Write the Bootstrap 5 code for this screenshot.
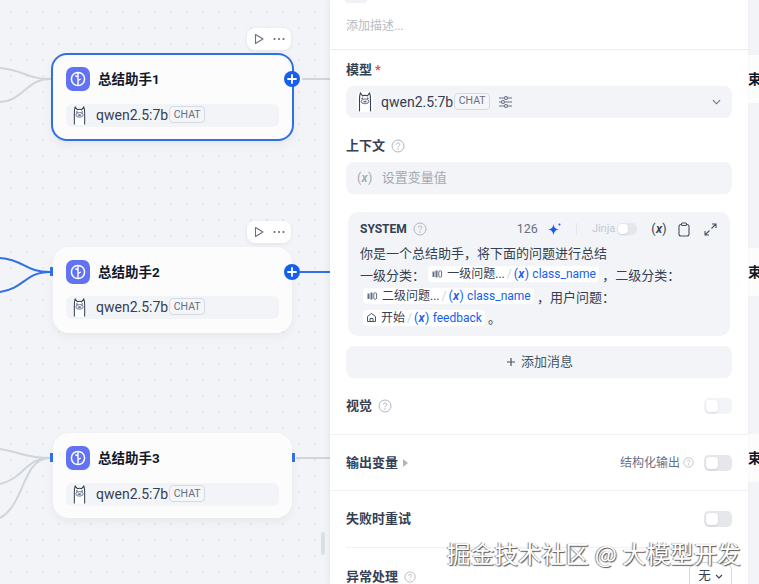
<!DOCTYPE html>
<html lang="zh-CN">
<head>
<meta charset="UTF-8">
<title>总结助手</title>
<link href="https://cdn.jsdelivr.net/npm/bootstrap@5.3.0/dist/css/bootstrap.min.css" rel="stylesheet">
<style>
html, body { height: 100%; }
body { margin: 0; overflow: hidden; background: #f2f4f7; font-family: Roboto, "Noto Sans CJK SC", sans-serif; color: #354052; font-size: 13px; }
.flow-canvas { position: absolute; inset: 0; overflow: hidden; background-color: #f2f4f7; background-image: radial-gradient(circle, #e6e8ec 1px, transparent 1.2px); background-size: 16px 16px; background-position: 3px 4px; }
.edges { position: absolute; left: 0; top: 0; }
.flow-node { position: absolute; left: 53px; width: 239px; background: #fcfcfd; border-radius: 16px; box-shadow: 0 4px 10px rgba(16,24,40,.05); padding: 13px 13px 0; }
.flow-node.picked { left: 51px; width: 243px; border: 2px solid #2f6fe8; }
.n1 { top: 53px; height: 88px; padding-top: 12px; }
.n2 { top: 247px; height: 86px; }
.n3 { top: 433px; height: 85px; }
.node-icon { width: 24px; height: 24px; border-radius: 7px; background: #6172f3; flex: none; }
.node-title { font-size: 13.5px; font-weight: 700; color: #101828; margin-left: 8px; }
.model-row { height: 23px; margin-top: 13px; background: #f2f4f7; border-radius: 6px; padding-left: 6px; color: #354052; }
.n2 .model-row { margin-top: 12px; }
.model-text { font-size: 14px; margin-left: 9px; white-space: nowrap; }
.chat-tag { display: inline-flex; align-items: center; justify-content: center; height: 17px; width: 36px; margin-left: 1px; border: 1px solid #d5d9e0; border-radius: 4px; font-size: 10.5px; color: #676f83; background: #f5f6f8; flex: none; position: relative; top: -1px; }
.node-tools { position: absolute; left: 247px; width: 44px; height: 22px; background: #fff; border-radius: 8px; box-shadow: 0 1px 4px rgba(16,24,40,.08); }
.tools-1 { top: 28px; }
.tools-2 { top: 221px; }
.add-handle { position: absolute; left: 284px; width: 16px; height: 16px; border-radius: 50%; background: #155eef; color: #fff; }
.add-1 { top: 71px; }
.add-2 { top: 264px; }
.port { position: absolute; width: 3px; height: 9px; background: #2f6fe8; }
.port-2l { left: 50px; top: 267px; }
.port-3l { left: 50px; top: 453px; }
.port-3r { left: 292px; top: 453px; }
.next-node { position: absolute; left: 748px; width: 11px; height: 48px; background: #fcfcfd; font-size: 13.5px; font-weight: 700; color: #101828; line-height: 48px; overflow: hidden; white-space: nowrap; }
.next-1 { top: 55px; }
.next-2 { top: 248px; }
.next-3 { top: 434px; }
.drag-bar { position: absolute; left: 321px; top: 532px; width: 4px; height: 23px; background: #dcdfe4; border-radius: 2px; }
.side-panel { position: absolute; left: 330px; top: 0; width: 418px; height: 584px; background: #fff; overflow: hidden; box-shadow: -2px 0 6px rgba(16,24,40,.05); }
.desc-line { height: 50px; padding: 0 16px; border-bottom: 1px solid #eaecf0; font-size: 12px; line-height: 17px; color: #b6bbc5; }
.name-stub { width: 22px; height: 3px; margin: 0 0 15px -1px; background: #f0f1f4; border-radius: 0 0 8px 8px; }
.field { padding: 0 16px; }
.field-top { padding-top: 11px; }
.field-mid { padding-top: 19px; }
.field-end { padding-top: 16px; }
.field-label { font-size: 13px; font-weight: 600; color: #354052; line-height: 18px; }
.req { color: #f04438; margin-left: 3px; }
.soft-box { height: 32px; background: #f2f4f7; border-radius: 8px; padding: 0 11px; }
.box-model { margin-top: 7px; }
.box-model .model-text { margin-left: 8px; }
.llama-chip { background: #fff; border-radius: 4px; }
.box-ctx { margin-top: 7px; color: #a4a9b4; }
.var-mark { font-size: 12.5px; letter-spacing: .3px; white-space: nowrap; }
.var-mark i { font-weight: 600; }
.ph-text { margin-left: 9px; font-size: 13px; }
.sys-card { margin: 18px 18px 0; height: 124px; background: #f2f4f7; border-radius: 10px; padding: 7px 13px 7px 12px; }
.sys-head { height: 20px; }
.sys-title { font-size: 12px; font-weight: 700; color: #354052; }
.sys-count { font-size: 12.5px; color: #676f83; margin-right: 1px; }
.jinja { font-size: 11px; color: #c5c9d1; }
.sep-v { width: 1px; height: 12px; background: #e5e7eb; margin: 0 15px 0 14px; }
.tiny-switch.jinja-switch { width: 20px; height: 12px; margin-left: 2px; margin-right: 14px; }
.tiny-switch.jinja-switch::after { left: 1px; top: 1px; width: 10px; height: 10px; }
.clip-icon { margin-left: 11px; }
.grow-icon { margin-left: 14px; }
.sys-text { margin-top: 4px; line-height: 21.4px; font-size: 13px; white-space: nowrap; }
.sys-first { margin-bottom: 1px; }
.var-tag { display: inline-flex; align-items: center; height: 16px; padding: 0 3px; background: #fff; border-radius: 4px; font-size: 12px; line-height: 16px; color: #354052; }
.tag-start { margin-left: 3px; }
.var-tag .slash { color: #d0d5dc; margin: 0 2px; }
.var-tag .blue { color: #155eef; }
.add-msg { margin: 10px 16px 0; height: 32px; background: #f2f4f7; border-radius: 8px; color: #495464; font-size: 13px; }
.set-row { padding: 0 16px; height: 56px; border-bottom: 1px solid #f0f1f4; }
.row-first { height: 57px; }
.row-last { border-bottom: 0; }
.inset-line { height: 1px; background: #f0f1f4; margin: 0 16px; }
.tiny-switch { display: block; width: 28px; height: 16px; border-radius: 5px; background: #e5e7eb; position: relative; flex: none; }
.tiny-switch::after { content: ""; position: absolute; left: 2px; top: 2px; width: 12px; height: 12px; background: #fff; border-radius: 4px; box-shadow: 0 1px 2px rgba(16,24,40,.12); }
.tiny-switch.off-light { background: #f2f4f7; }
.struct-label { font-size: 12px; color: #676f83; }
.struct-tip { margin: 0 10px 0 3px; flex: none; }
.none-select { height: 28px; width: 43px; border: 1px solid #d5d9e0; border-radius: 8px; font-size: 12.5px; color: #354052; margin-top: -2px; }
.tip { flex: none; margin-left: 6px; }
.mark-text { position: absolute; left: 447px; top: 536px; font-size: 23.5px; line-height: 34px; color: #fff; white-space: nowrap; text-shadow: 1px 1px 1px #555, -1px 0 1px #888; font-family: "Noto Sans CJK SC", sans-serif; letter-spacing: .2px; }
</style>
</head>
<body>
<svg width="0" height="0" class="position-absolute">
  <defs>
    <symbol id="llama" viewBox="0 0 16 20">
      <path d="M2.5 19.5V10C2.5 7.5 2.2 4 3.4 1L5.6 3.8C7 3.3 9 3.3 10.4 3.8L12.6 1C13.8 4 13.5 7.5 13.5 10V19.5" fill="#fff" stroke="#354052" stroke-width="1.1"/>
      <ellipse cx="8" cy="9.3" rx="4" ry="2.5" fill="#e5e7eb" stroke="#676f83" stroke-width=".9"/>
      <ellipse cx="8" cy="9.6" rx="1.5" ry=".9" fill="#676f83"/>
      <circle cx="5.2" cy="6.2" r=".8" fill="#354052"/><circle cx="10.8" cy="6.2" r=".8" fill="#354052"/>
    </symbol>
    <symbol id="brain" viewBox="0 0 24 24">
      <circle cx="12" cy="12" r="6.6" fill="none" stroke="#fff" stroke-width="1.5"/>
      <path d="M12 5.5V18.5M12 10L9.3 8.7M12 13.5L14.8 12" fill="none" stroke="#fff" stroke-width="1.4"/>
    </symbol>
    <symbol id="help" viewBox="0 0 14 14">
      <circle cx="7" cy="7" r="6" fill="none" stroke="#b0b5bf" stroke-width="1"/>
      <path d="M5.3 5.5C5.4 3.4 8.8 3.5 8.8 5.5C8.8 6.9 7 6.9 7 8.3" fill="none" stroke="#b0b5bf" stroke-width="1"/>
      <circle cx="7" cy="10" r=".7" fill="#b0b5bf"/>
    </symbol>
    <symbol id="classify" viewBox="0 0 12 12">
      <path d="M1.5 3.5H3.5V9H1.5ZM4.5 2.5H6.5V9.5H4.5Z" fill="#676f83"/>
      <rect x="7.8" y="2.8" width="2.8" height="6.4" rx="1.2" fill="none" stroke="#676f83"/>
    </symbol>
    <symbol id="play" viewBox="0 0 12 12">
      <path d="M2.5 1.5L10 6L2.5 10.5Z" fill="none" stroke="#676f83" stroke-width="1.1" stroke-linejoin="round"/>
    </symbol>
    <symbol id="dots" viewBox="0 0 12 4">
      <circle cx="1.5" cy="2" r="1.1" fill="#676f83"/><circle cx="6" cy="2" r="1.1" fill="#676f83"/><circle cx="10.5" cy="2" r="1.1" fill="#676f83"/>
    </symbol>
    <symbol id="plus" viewBox="0 0 16 16">
      <path d="M8 4V12M4 8H12" stroke="#fff" stroke-width="1.8" stroke-linecap="round"/>
    </symbol>
  </defs>
</svg>

<div class="flow-canvas">
  <svg class="edges" width="330" height="584" fill="none" stroke-width="2">
    <g stroke="#d0d5dc">
      <path d="M0 68C25 70 25 79 51 79M0 102C25 100 25 79 51 79M302 79H330"/>
      <path d="M0 449C25 453 25 458 50 458M0 484C25 478 25 458 50 458M0 518C25 505 22 458 50 458M296 458H330"/>
    </g>
    <g stroke="#2f6fe8">
      <path d="M0 258C25 260 25 272 50 272M0 292C25 288 25 272 50 272M300 272H330"/>
    </g>
  </svg>

  <div class="node-tools tools-1 d-flex align-items-center justify-content-center gap-2">
    <svg width="12" height="12"><use href="#play"/></svg><svg width="12" height="4"><use href="#dots"/></svg>
  </div>
  <div class="flow-node picked n1">
    <div class="d-flex align-items-center">
      <svg class="node-icon"><use href="#brain"/></svg><span class="node-title">总结助手1</span>
    </div>
    <div class="model-row d-flex align-items-center">
      <svg width="15" height="19"><use href="#llama"/></svg><span class="model-text">qwen2.5:7b</span><span class="chat-tag">CHAT</span>
    </div>
  </div>
  <div class="add-handle add-1 d-flex"><svg width="16" height="16"><use href="#plus"/></svg></div>

  <div class="node-tools tools-2 d-flex align-items-center justify-content-center gap-2">
    <svg width="12" height="12"><use href="#play"/></svg><svg width="12" height="4"><use href="#dots"/></svg>
  </div>
  <div class="flow-node n2">
    <div class="d-flex align-items-center">
      <svg class="node-icon"><use href="#brain"/></svg><span class="node-title">总结助手2</span>
    </div>
    <div class="model-row d-flex align-items-center">
      <svg width="15" height="19"><use href="#llama"/></svg><span class="model-text">qwen2.5:7b</span><span class="chat-tag">CHAT</span>
    </div>
  </div>
  <div class="port port-2l"></div>
  <div class="add-handle add-2 d-flex"><svg width="16" height="16"><use href="#plus"/></svg></div>

  <div class="flow-node n3">
    <div class="d-flex align-items-center">
      <svg class="node-icon"><use href="#brain"/></svg><span class="node-title">总结助手3</span>
    </div>
    <div class="model-row d-flex align-items-center">
      <svg width="15" height="19"><use href="#llama"/></svg><span class="model-text">qwen2.5:7b</span><span class="chat-tag">CHAT</span>
    </div>
  </div>
  <div class="port port-3l"></div>
  <div class="port port-3r"></div>

  <div class="next-node next-1">束</div>
  <div class="next-node next-2">束</div>
  <div class="next-node next-3">束</div>
  <div class="drag-bar"></div>
</div>

<div class="side-panel">
  <div class="desc-line"><div class="name-stub"></div>添加描述...</div>

  <div class="field field-top">
    <div class="field-label">模型<span class="req">*</span></div>
    <div class="soft-box box-model d-flex align-items-center">
      <svg class="llama-chip" width="16" height="20"><use href="#llama"/></svg>
      <span class="model-text">qwen2.5:7b</span><span class="chat-tag">CHAT</span>
      <svg class="ms-2" width="15" height="14" viewBox="0 0 15 14" fill="none" stroke="#676f83" stroke-width="1.1"><path d="M1 3H6M10 3H14M1 7H3M7 7H14M1 11H6M10 11H14"/><circle cx="8" cy="3" r="1.5"/><circle cx="5" cy="7" r="1.5"/><circle cx="8" cy="11" r="1.5"/></svg>
      <svg class="ms-auto" width="9" height="6" viewBox="0 0 10 6" fill="none" stroke="#676f83" stroke-width="1.2"><path d="M1 1L5 5L9 1"/></svg>
    </div>
  </div>

  <div class="field field-mid">
    <div class="field-label d-flex align-items-center">上下文<svg class="tip" width="14" height="14"><use href="#help"/></svg></div>
    <div class="soft-box box-ctx d-flex align-items-center">
      <span class="var-mark">(<i>x</i>)</span><span class="ph-text">设置变量值</span>
    </div>
  </div>

  <div class="sys-card">
    <div class="sys-head d-flex align-items-center">
      <span class="sys-title">SYSTEM</span><svg class="tip" width="14" height="14"><use href="#help"/></svg>
      <span class="sys-count ms-auto">126</span>
      <svg class="ms-2" width="15" height="15" viewBox="0 0 15 15"><path d="M6.5 2C7 5.5 8.5 7 12 7.5C8.5 8 7 9.5 6.5 13.5C6 9.5 4.5 8 1 7.5C4.5 7 6 5.5 6.5 2Z" fill="#155eef"/><circle cx="12.5" cy="2.5" r="1" fill="#155eef"/></svg>
      <span class="sep-v"></span>
      <span class="jinja">Jinja</span>
      <span class="tiny-switch jinja-switch"></span>
      <span class="var-mark">(<i>x</i>)</span>
      <svg class="clip-icon" width="12" height="15" viewBox="0 0 12 15" fill="none" stroke="#495464" stroke-width="1.1"><rect x="1" y="2.5" width="10" height="11.5" rx="2"/><rect x="3.5" y="1" width="5" height="2.5" rx="1" fill="#f2f4f7"/></svg>
      <svg class="grow-icon" width="13" height="13" viewBox="0 0 13 13" fill="none" stroke="#495464" stroke-width="1.1"><path d="M8 1H12V5M12 1L7.5 5.5M5 12H1V8M1 12L5.5 7.5"/></svg>
    </div>
    <div class="sys-text">
      <div class="sys-first">你是一个总结助手，将下面的问题进行总结</div>
      <div>一级分类： <span class="var-tag"><svg class="me-1" width="12" height="12"><use href="#classify"/></svg>一级问题...<span class="slash">/</span><span class="blue"><span class="var-mark">(<i>x</i>)</span> class_name</span></span> ，二级分类：</div>
      <div><span class="var-tag tag-start"><svg class="me-1" width="12" height="12"><use href="#classify"/></svg>二级问题...<span class="slash">/</span><span class="blue"><span class="var-mark">(<i>x</i>)</span> class_name</span></span> ，用户问题：</div>
      <div><span class="var-tag tag-start"><svg class="me-1" width="11" height="11" viewBox="0 0 11 11" fill="none" stroke="#495464"><path d="M1.5 9.5V4.5L5.5 1.5L9.5 4.5V9.5ZM4 9.5V6.5H7V9.5"/></svg>开始<span class="slash">/</span><span class="blue"><span class="var-mark">(<i>x</i>)</span> feedback</span></span> 。</div>
    </div>
  </div>

  <div class="add-msg d-flex align-items-center justify-content-center">
    <svg class="me-1" width="12" height="12" viewBox="0 0 12 12"><path d="M6 2V10M2 6H10" stroke="#495464" stroke-width="1.2"/></svg>添加消息
  </div>

  <div class="set-row row-first d-flex align-items-center justify-content-between">
    <div class="field-label d-flex align-items-center">视觉<svg class="tip" width="14" height="14"><use href="#help"/></svg></div>
    <span class="tiny-switch off-light"></span>
  </div>
  <div class="set-row d-flex align-items-center justify-content-between">
    <div class="field-label d-flex align-items-center">输出变量<svg class="ms-1" width="7" height="8" viewBox="0 0 7 8"><path d="M1 0L6 4L1 8Z" fill="#b0b5bf"/></svg></div>
    <div class="d-flex align-items-center">
      <span class="struct-label">结构化输出</span><svg class="struct-tip" width="11" height="11"><use href="#help"/></svg>
      <span class="tiny-switch"></span>
    </div>
  </div>
  <div class="set-row row-last d-flex align-items-center justify-content-between">
    <div class="field-label">失败时重试</div>
    <span class="tiny-switch"></span>
  </div>
  <div class="inset-line"></div>
  <div class="field field-end d-flex justify-content-between">
    <div class="field-label d-flex align-items-center">异常处理<svg class="tip" width="12" height="12"><use href="#help"/></svg></div>
    <div class="none-select d-flex align-items-center justify-content-center gap-1">无<svg width="8" height="5" viewBox="0 0 8 5" fill="none" stroke="#354052" stroke-width="1.1"><path d="M1 1L4 4L7 1"/></svg></div>
  </div>
</div>

<div class="mark-text">掘金技术社区 @ 大模型开发</div>
</body>
</html>
